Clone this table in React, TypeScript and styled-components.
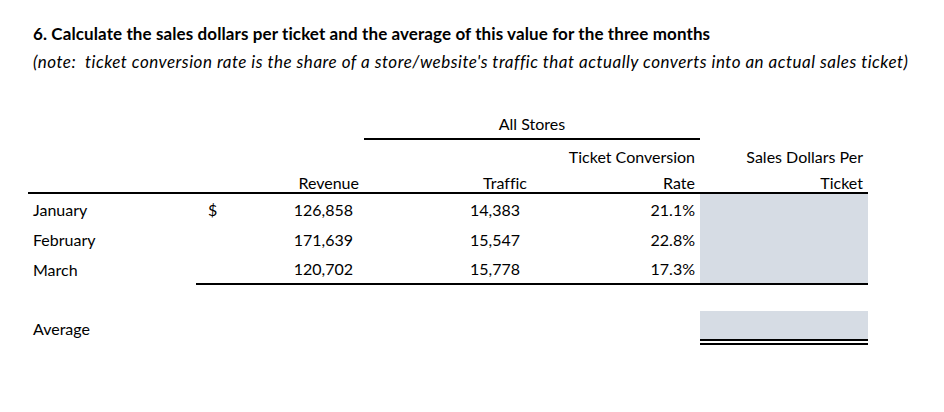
import React from 'react';
import styled, { createGlobalStyle, css } from 'styled-components';

const GlobalStyle = createGlobalStyle`
  html, body {
    margin: 0;
    padding: 0;
    background: #fff;
  }
  body {
    font-family: Lato, 'Open Sans', sans-serif;
    font-variant-ligatures: none;
    color: #000;
  }
`;

const Page = styled.div`
  width: 944px;
  height: 412px;
  box-sizing: border-box;
  padding: 20px 0 0 28px;
`;

const Heading = styled.div`
  padding-left: 5px;
  font-size: 17px;
  line-height: 28px;
  font-weight: 700;
  letter-spacing: 0.1px;
`;

const Note = styled.div`
  padding-left: 5px;
  font-size: 17px;
  line-height: 28px;
  font-style: italic;
  letter-spacing: 0.5px;
  white-space: pre;
`;

const Sheet = styled.div`
  margin-top: 32px;
  width: 840px;
`;

const Row = styled.div<{ $h: number }>`
  display: grid;
  grid-template-columns: repeat(5, 168px);
  height: ${(p) => p.$h}px;
  font-size: 16px;
`;

type Align = 'left' | 'right' | 'center' | 'between';

const Cell = styled.div<{
  $align?: Align;
  $span?: number;
  $pl?: number;
  $pr?: number;
  $rule?: 'single' | 'double';
  $fill?: boolean;
}>`
  box-sizing: border-box;
  display: flex;
  align-items: center;
  white-space: nowrap;
  padding-left: ${(p) => p.$pl ?? 5}px;
  padding-right: ${(p) => p.$pr ?? 5}px;
  grid-column: span ${(p) => p.$span ?? 1};
  justify-content: ${(p) =>
    p.$align === 'right'
      ? 'flex-end'
      : p.$align === 'center'
      ? 'center'
      : p.$align === 'between'
      ? 'space-between'
      : 'flex-start'};
  background-clip: padding-box;
  ${(p) => p.$fill && css`background-color: #d6dce4;`}
  ${(p) => p.$rule === 'single' && css`border-bottom: 2px solid #000;`}
  ${(p) => p.$rule === 'double' && css`border-bottom: 6px double #000;`}
`;

const months = [
  { name: 'January', revenue: '126,858', traffic: '14,383', rate: '21.1%', dollar: true },
  { name: 'February', revenue: '171,639', traffic: '15,547', rate: '22.8%', dollar: false },
  { name: 'March', revenue: '120,702', traffic: '15,778', rate: '17.3%', dollar: false },
];

export default function App() {
  return (
    <>
      <GlobalStyle />
      <Page>
        <Heading>
          6. Calculate the sales dollars per ticket and the average of this value for the three months
        </Heading>
        <Note>
          {"(note:  ticket conversion rate is the share of a store/website's traffic that actually converts into an actual sales ticket)"}
        </Note>

        <Sheet>
          <Row $h={32}>
            <Cell />
            <Cell />
            <Cell $span={2} $align="center" $rule="single">
              All Stores
            </Cell>
            <Cell />
          </Row>
          <Row $h={32}>
            <Cell />
            <Cell />
            <Cell />
            <Cell $align="right">Ticket Conversion</Cell>
            <Cell $align="right">Sales Dollars Per</Cell>
          </Row>
          <Row $h={22}>
            <Cell $rule="single" />
            <Cell $align="right" $rule="single">Revenue</Cell>
            <Cell $align="right" $rule="single">Traffic</Cell>
            <Cell $align="right" $rule="single">Rate</Cell>
            <Cell $align="right" $rule="single">Ticket</Cell>
          </Row>

          {months.map((m, i) => {
            const last = i === months.length - 1;
            const rule = last ? 'single' : undefined;
            return (
              <Row key={m.name} $h={last ? 31 : 30}>
                <Cell>{m.name}</Cell>
                <Cell $align="between" $pl={12} $pr={11} $rule={rule}>
                  <span>{m.dollar ? '$' : ''}</span>
                  <span>{m.revenue}</span>
                </Cell>
                <Cell $align="right" $pr={12} $rule={rule}>
                  {m.traffic}
                </Cell>
                <Cell $align="right" $rule={rule}>
                  {m.rate}
                </Cell>
                <Cell $fill $rule={rule} />
              </Row>
            );
          })}

          <Row $h={26} />
          <Row $h={34}>
            <Cell>Average</Cell>
            <Cell />
            <Cell />
            <Cell />
            <Cell $fill $rule="double" />
          </Row>
        </Sheet>
      </Page>
    </>
  );
}
